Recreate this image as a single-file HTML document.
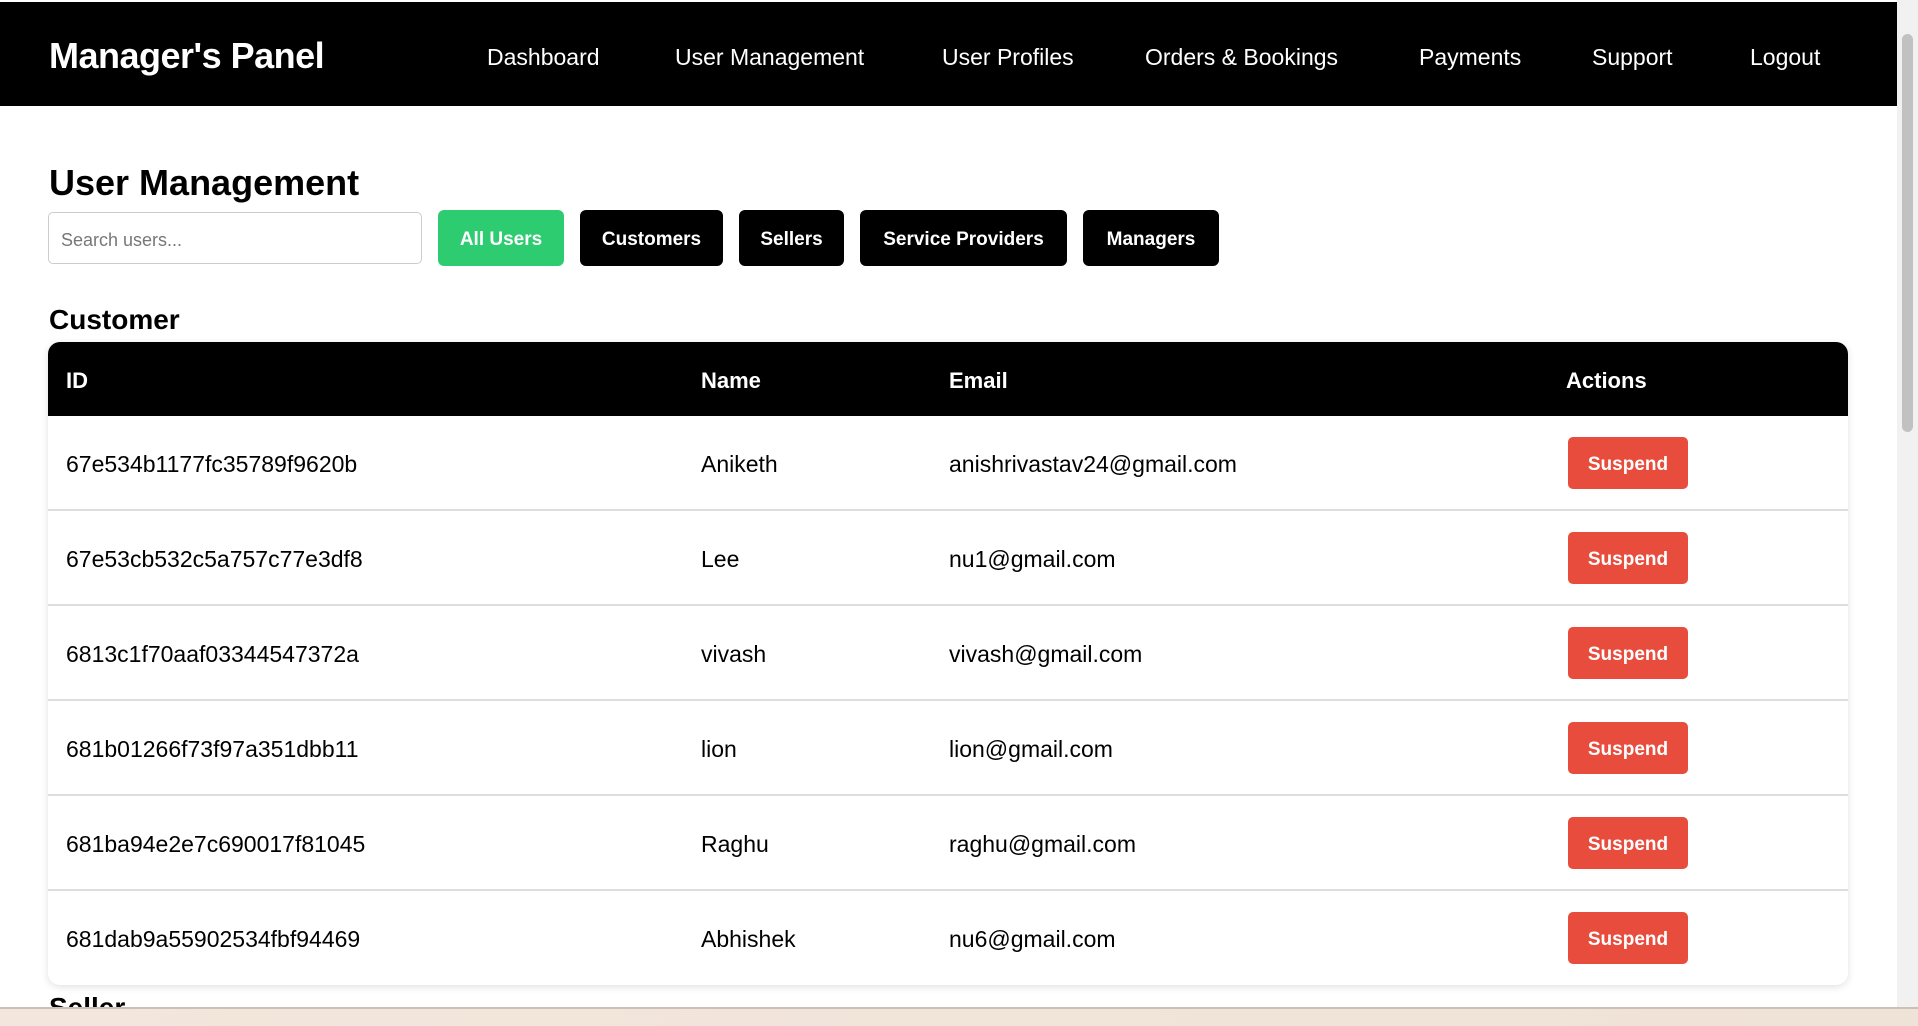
<!DOCTYPE html>
<html><head><meta charset="utf-8"><style>
*{margin:0;padding:0;box-sizing:border-box}
body{width:1918px;height:1026px;overflow:hidden;background:#fff;font-family:"Liberation Sans",sans-serif;position:relative;color:#000}
.hdr{position:absolute;left:0;top:2px;width:1897px;height:104px;background:#000}
.brand{position:absolute;left:49px;top:33px;color:#fff;font-weight:bold;font-size:36px;letter-spacing:-0.5px}
.nav{position:absolute;top:42px;color:#fff;font-size:23px}
.sb{position:absolute;right:0;top:0;width:21px;height:1007px;background:#f1f1f1}
.thumb{position:absolute;right:5px;top:34px;width:11px;height:398px;background:#c1c1c1;border-radius:6px}
h2{position:absolute;left:49px;top:162px;font-size:36px;font-weight:bold}
.search{position:absolute;left:48px;top:212px;width:374px;height:52px;border:1px solid #ccc;border-radius:5px;color:#777;font-size:18px;padding:17px 12px}
.btn{position:absolute;top:210px;height:56px;border-radius:6px;background:#000;color:#fff;font-weight:bold;font-size:19px;display:flex;align-items:center;justify-content:center;padding-top:4px}
h3{position:absolute;left:49px;top:304px;font-size:28px;font-weight:bold}
.tbl{position:absolute;left:48px;top:342px;width:1800px;height:643px;border-radius:12px;box-shadow:0 2px 8px rgba(0,0,0,.12);overflow:hidden;background:#fff}
.th{position:absolute;left:0;top:0;width:100%;height:74px;background:#000;color:#fff;font-weight:bold;font-size:22px}
.th span,.row span{position:absolute}
.th span{top:26px}
.row{position:absolute;left:0;width:100%;height:95px;border-bottom:2px solid #ddd;font-size:23px}
.row span{top:35px}
.sus{position:absolute;left:1520px;top:21px;width:120px;height:52px;background:#e74c3c;color:#fff;border-radius:5px;font-weight:bold;font-size:19px;display:flex;align-items:center;justify-content:center;padding-top:3px}
.tb{position:absolute;left:0;top:1007px;width:1918px;height:19px;background:linear-gradient(90deg,#f3e6dc,#efe2d6);border-top:2px solid #c9c0b8}
</style></head><body>
<div class="hdr">
<div class="brand">Manager's Panel</div>
<div class="nav" style="left:487px">Dashboard</div>
<div class="nav" style="left:675px">User Management</div>
<div class="nav" style="left:942px">User Profiles</div>
<div class="nav" style="left:1145px">Orders &amp; Bookings</div>
<div class="nav" style="left:1419px">Payments</div>
<div class="nav" style="left:1592px">Support</div>
<div class="nav" style="left:1750px">Logout</div>
</div>
<div class="sb"><div class="thumb"></div></div>
<h2>User Management</h2>
<div class="search">Search users...</div>
<div class="btn" style="left:438px;width:126px;background:#2ecc71">All Users</div>
<div class="btn" style="left:580px;width:143px">Customers</div>
<div class="btn" style="left:739px;width:105px">Sellers</div>
<div class="btn" style="left:860px;width:207px">Service Providers</div>
<div class="btn" style="left:1083px;width:136px">Managers</div>
<h3>Customer</h3>
<div style="position:absolute;left:49px;top:992px;font-size:28px;font-weight:bold">Seller</div>
<div class="tbl">
<div class="th"><span style="left:18px">ID</span><span style="left:653px">Name</span><span style="left:901px">Email</span><span style="left:1518px">Actions</span></div>
<div class="row" style="top:74px"><span style="left:18px">67e534b1177fc35789f9620b</span><span style="left:653px">Aniketh</span><span style="left:901px">anishrivastav24@gmail.com</span><div class="sus">Suspend</div></div>
<div class="row" style="top:169px"><span style="left:18px">67e53cb532c5a757c77e3df8</span><span style="left:653px">Lee</span><span style="left:901px">nu1@gmail.com</span><div class="sus">Suspend</div></div>
<div class="row" style="top:264px"><span style="left:18px">6813c1f70aaf03344547372a</span><span style="left:653px">vivash</span><span style="left:901px">vivash@gmail.com</span><div class="sus">Suspend</div></div>
<div class="row" style="top:359px"><span style="left:18px">681b01266f73f97a351dbb11</span><span style="left:653px">lion</span><span style="left:901px">lion@gmail.com</span><div class="sus">Suspend</div></div>
<div class="row" style="top:454px"><span style="left:18px">681ba94e2e7c690017f81045</span><span style="left:653px">Raghu</span><span style="left:901px">raghu@gmail.com</span><div class="sus">Suspend</div></div>
<div class="row" style="top:549px;border-bottom:none"><span style="left:18px">681dab9a55902534fbf94469</span><span style="left:653px">Abhishek</span><span style="left:901px">nu6@gmail.com</span><div class="sus">Suspend</div></div>
</div>
<div class="tb"></div>
</body></html>
